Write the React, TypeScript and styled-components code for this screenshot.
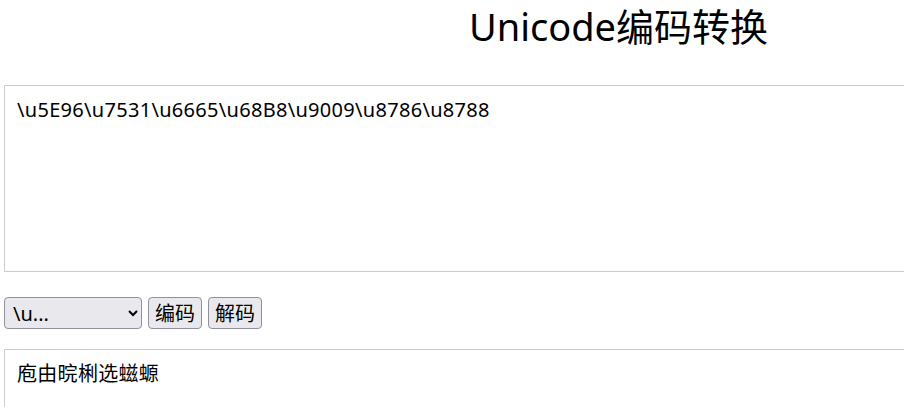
import React from "react";
import styled, { createGlobalStyle } from "styled-components";

const Global = createGlobalStyle`
  html, body { margin: 0; padding: 0; background: #fff; overflow: hidden; }
  body { font-family: "Noto Sans", "Noto Sans CJK SC", sans-serif; color: #000; }
`;

const Page = styled.div`
  width: 1233px;
  padding: 0 0 0 4px;
  box-sizing: border-box;
  display: flex;
  flex-direction: column;
`;

const Title = styled.h1`
  margin: 0;
  height: 85px;
  font-size: 38px;
  font-weight: 400;
  line-height: 52px;
  text-align: center;
  font-family: "Noto Sans", "Noto Sans CJK SC", sans-serif;
`;

const Box = styled.textarea<{ $h: number }>`
  display: block;
  width: 100%;
  height: ${(p) => p.$h}px;
  box-sizing: border-box;
  border: 1px solid #cccccc;
  margin: 0;
  padding: 10px 12px;
  font-size: 20px;
  line-height: 28px;
  letter-spacing: 0.3px;
  font-family: "Noto Sans", "Noto Sans CJK SC", sans-serif;
  color: #000;
  resize: none;
  outline: none;
  background: #fff;
`;

const Controls = styled.div`
  display: flex;
  align-items: center;
  gap: 6px;
  margin: 25px 0 20px 0;
`;

const Select = styled.select`
  width: 138px;
  height: 32px;
  box-sizing: border-box;
  font-size: 20px;
  font-family: "Noto Sans", "Noto Sans CJK SC", sans-serif;
  background: #e9e9ed;
  border: 1px solid #8f8f9d;
  border-radius: 4px;
  padding: 0 4px;
  color: #000;
`;

const Button = styled.button`
  height: 32px;
  box-sizing: border-box;
  font-size: 20px;
  font-family: "Noto Sans CJK SC", sans-serif;
  background: #e9e9ed;
  border: 1px solid #8f8f9d;
  border-radius: 4px;
  padding: 0 6px;
  color: #000;
  line-height: 1;
`;

export default function App() {
  return (
    <>
      <Global />
      <Page>
        <Title>Unicode编码转换</Title>
        <Box $h={187} defaultValue={"\\u5E96\\u7531\\u6665\\u68B8\\u9009\\u8786\\u8788"} />
        <Controls>
          <Select defaultValue="u">
            <option value="u">\u...</option>
          </Select>
          <Button>编码</Button>
          <Button>解码</Button>
        </Controls>
        <Box $h={120} defaultValue={"庖由晥梸选螆螈"} />
      </Page>
    </>
  );
}
